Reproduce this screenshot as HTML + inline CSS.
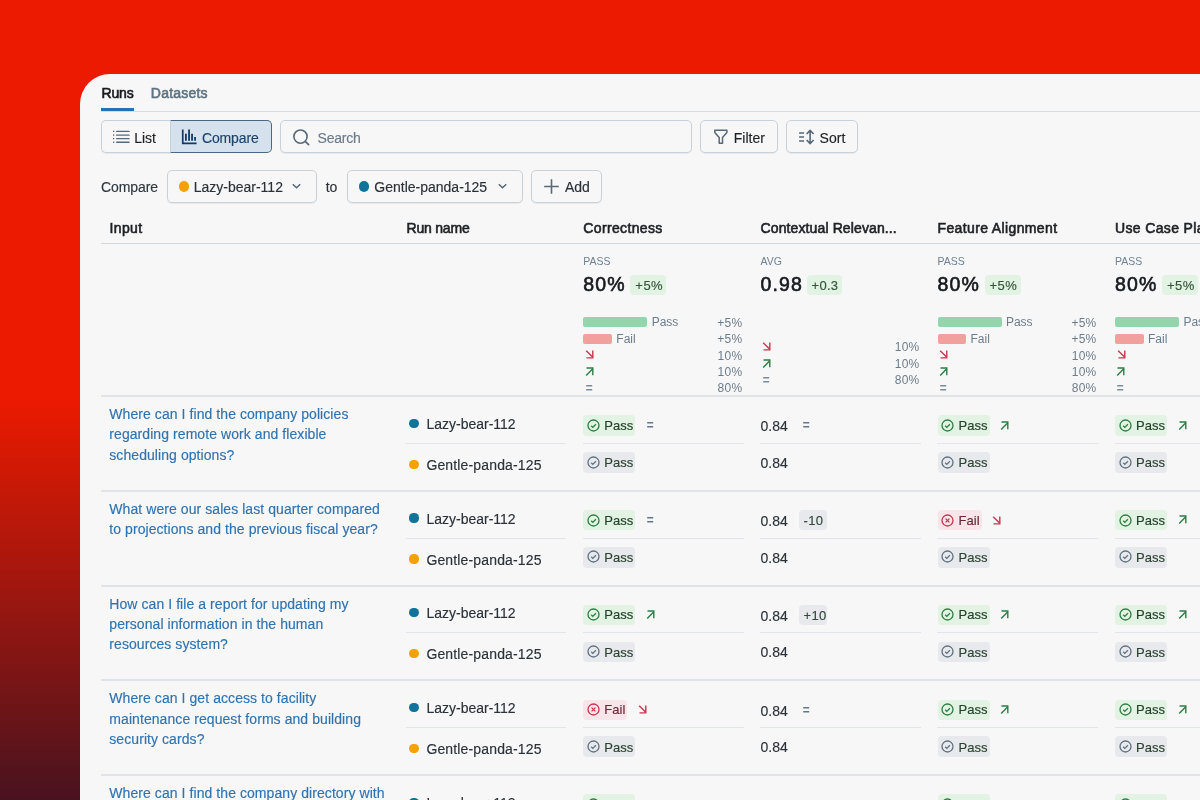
<!DOCTYPE html>
<html><head><meta charset="utf-8">
<style>
*{box-sizing:border-box;margin:0;padding:0}
html,body{width:1200px;height:800px;overflow:hidden}
body{position:relative;font-family:"Liberation Sans",sans-serif;color:#1d2125;
background:linear-gradient(180deg,#eb1a00 0px,#eb1a00 400px,#48131f 800px);}
.panel{position:absolute;left:80px;top:74px;width:1120px;height:726px;background:#f7f7f7;border-top-left-radius:30px;overflow:hidden}
.a{position:absolute;white-space:nowrap;-webkit-text-stroke:0.15px currentColor}
.nl{-webkit-text-stroke:0}
svg.a{overflow:visible}
#ui{will-change:transform}
</style></head><body>
<div class="panel">
<div id="ui" style="position:absolute;left:-80px;top:-74px;width:1200px;height:800px">
<div class="a" style="left:101.50px;top:83.00px;font-size:14px;line-height:20px;font-weight:400;color:#16191d;letter-spacing:-0.15px;-webkit-text-stroke:0.6px currentColor;">Runs</div>
<div class="a" style="left:150.80px;top:83.00px;font-size:14px;line-height:20px;font-weight:400;color:#5f7384;letter-spacing:0.22px;-webkit-text-stroke:0.6px currentColor;">Datasets</div>
<div class="a" style="left:101.00px;top:108.00px;width:33.00px;height:3.00px;background:#2272b4;"></div>
<div class="a" style="left:101.00px;top:111.00px;width:1099.00px;height:1.00px;background:#d3dbe3;"></div>
<div class="a" style="left:101.00px;top:120.00px;width:70.00px;height:33.00px;background:#f7f7f7;border:1px solid #c7d1da;border-right:none;border-radius:5px 0 0 5px;box-shadow:0 1px 1px rgba(0,0,0,0.06)"></div>
<div class="a" style="left:169.50px;top:120.00px;width:102.50px;height:33.40px;background:#d5e2ee;border:1.5px solid #4a6885;border-left:1px solid #c3d2de;border-radius:0 5px 5px 0"></div>
<svg class="a" style="left:113px;top:130px;" width="18" height="14" viewBox="0 0 18 14"><rect x="0" y="0.75" width="1.3" height="1.3" fill="#4f6475"/><rect x="3" y="0.7" width="13.7" height="1.4" rx="0.6" fill="#556a7b"/><rect x="0" y="4.45" width="1.3" height="1.3" fill="#4f6475"/><rect x="3" y="4.4" width="13.7" height="1.4" rx="0.6" fill="#556a7b"/><rect x="0" y="7.95" width="1.3" height="1.3" fill="#4f6475"/><rect x="3" y="7.9" width="13.7" height="1.4" rx="0.6" fill="#556a7b"/><rect x="0" y="11.55" width="1.3" height="1.3" fill="#4f6475"/><rect x="3" y="11.5" width="13.7" height="1.4" rx="0.6" fill="#556a7b"/></svg>
<div class="a" style="left:134.20px;top:127.50px;font-size:14px;line-height:20px;font-weight:400;color:#1d2125;letter-spacing:0px;">List</div>
<svg class="a" style="left:181px;top:129px;" width="17" height="16" viewBox="0 0 17 16"><path d="M1.75 0.4V14.3H15.6" stroke="#0f3a66" stroke-width="1.7" fill="none"/><path d="M4.9 4.7V11.8M8.05 0.4V11.8M11.05 4.7V11.8M14.05 7.9V11.8" stroke="#0f3a66" stroke-width="1.8"/></svg>
<div class="a" style="left:202.00px;top:127.50px;font-size:14px;line-height:20px;font-weight:400;color:#1c426a;letter-spacing:-0.15px;">Compare</div>
<div class="a" style="left:280.00px;top:120.00px;width:412.00px;height:33.00px;background:#f7f7f7;border:1px solid #c7d1da;border-radius:5px;box-shadow:0 1px 1px rgba(0,0,0,0.06)"></div>
<svg class="a" style="left:292px;top:128px;" width="18" height="18" viewBox="0 0 18 18"><circle cx="8.5" cy="8.6" r="6.6" stroke="#55697a" stroke-width="1.6" fill="none"/><path d="M13.2 13.3L16.6 16.7" stroke="#55697a" stroke-width="1.7" stroke-linecap="round"/></svg>
<div class="a" style="left:317.50px;top:127.50px;font-size:14px;line-height:20px;font-weight:400;color:#6a7b8a;letter-spacing:-0.2px;">Search</div>
<div class="a" style="left:700.00px;top:120.00px;width:78.00px;height:33.00px;background:#f7f7f7;border:1px solid #c7d1da;border-radius:5px;box-shadow:0 1px 1px rgba(0,0,0,0.06)"></div>
<svg class="a" style="left:713px;top:129px;" width="16" height="16" viewBox="0 0 16 16"><path d="M1.8 1.3H13.9V3.6L9.5 8.5V14.3H6.2V8.5L1.8 3.6Z" stroke="#55697a" stroke-width="1.5" fill="none" stroke-linejoin="round"/></svg>
<div class="a" style="left:733.80px;top:127.50px;font-size:14px;line-height:20px;font-weight:400;color:#1d2125;letter-spacing:0px;">Filter</div>
<div class="a" style="left:786.00px;top:120.00px;width:72.00px;height:33.00px;background:#f7f7f7;border:1px solid #c7d1da;border-radius:5px;box-shadow:0 1px 1px rgba(0,0,0,0.06)"></div>
<svg class="a" style="left:798px;top:129px;" width="20" height="16" viewBox="0 0 20 16"><path d="M1.1 4H6.1M1.1 8H6.1M1.1 12H6.1" stroke="#55697a" stroke-width="1.6"/><path d="M12.1 2V14M8.6 5L12.1 1.5L15.6 5M8.6 11L12.1 14.5L15.6 11" stroke="#55697a" stroke-width="1.6" fill="none"/></svg>
<div class="a" style="left:819.60px;top:127.50px;font-size:14px;line-height:20px;font-weight:400;color:#1d2125;letter-spacing:0px;">Sort</div>
<div class="a" style="left:101.00px;top:177.00px;font-size:14px;line-height:20px;font-weight:400;color:#2e3740;letter-spacing:-0.1px;">Compare</div>
<div class="a" style="left:167.00px;top:170.00px;width:150.00px;height:33.00px;background:#f7f7f7;border:1px solid #c7d1da;border-radius:5px;box-shadow:0 1px 1px rgba(0,0,0,0.06)"></div>
<div class="a" style="left:178.75px;top:181px;width:10.5px;height:10.5px;border-radius:50%;background:#f5a200"></div>
<div class="a" style="left:193.70px;top:177.00px;font-size:14px;line-height:20px;font-weight:400;color:#2b3138;letter-spacing:0px;">Lazy-bear-112</div>
<svg class="a" style="left:291px;top:182px;" width="11" height="8" viewBox="0 0 11 8"><path d="M1.8 2.2L5.5 5.8L9.2 2.2" stroke="#55697a" stroke-width="1.5" fill="none"/></svg>
<div class="a" style="left:325.70px;top:177.00px;font-size:14px;line-height:20px;font-weight:400;color:#2b3138;letter-spacing:0px;">to</div>
<div class="a" style="left:347.00px;top:170.00px;width:176.00px;height:33.00px;background:#f7f7f7;border:1px solid #c7d1da;border-radius:5px;box-shadow:0 1px 1px rgba(0,0,0,0.06)"></div>
<div class="a" style="left:358.75px;top:181px;width:10.5px;height:10.5px;border-radius:50%;background:#10739a"></div>
<div class="a" style="left:374.30px;top:177.00px;font-size:14px;line-height:20px;font-weight:400;color:#2b3138;letter-spacing:0px;">Gentle-panda-125</div>
<svg class="a" style="left:497px;top:182px;" width="11" height="8" viewBox="0 0 11 8"><path d="M1.8 2.2L5.5 5.8L9.2 2.2" stroke="#55697a" stroke-width="1.5" fill="none"/></svg>
<div class="a" style="left:531.00px;top:170.00px;width:71.00px;height:33.00px;background:#f7f7f7;border:1px solid #c7d1da;border-radius:5px;box-shadow:0 1px 1px rgba(0,0,0,0.06)"></div>
<svg class="a" style="left:543px;top:178px;" width="17" height="17" viewBox="0 0 17 17"><path d="M8.5 1.2V15.8M1.2 8.5H15.8" stroke="#55697a" stroke-width="1.6"/></svg>
<div class="a" style="left:565.00px;top:177.00px;font-size:14px;line-height:20px;font-weight:400;color:#2b3138;letter-spacing:0px;">Add</div>
<div class="a" style="left:109.60px;top:218.00px;font-size:14px;line-height:20px;font-weight:400;color:#1d2125;letter-spacing:0.35px;-webkit-text-stroke:0.6px currentColor;">Input</div>
<div class="a" style="left:406.50px;top:218.00px;font-size:14px;line-height:20px;font-weight:400;color:#1d2125;letter-spacing:-0.2px;-webkit-text-stroke:0.6px currentColor;">Run name</div>
<div class="a" style="left:583.30px;top:218.00px;font-size:14px;line-height:20px;font-weight:400;color:#1d2125;letter-spacing:0.35px;-webkit-text-stroke:0.6px currentColor;">Correctness</div>
<div class="a" style="left:760.50px;top:218.00px;font-size:14px;line-height:20px;font-weight:400;color:#1d2125;letter-spacing:0.12px;-webkit-text-stroke:0.6px currentColor;">Contextual Relevan...</div>
<div class="a" style="left:937.50px;top:218.00px;font-size:14px;line-height:20px;font-weight:400;color:#1d2125;letter-spacing:0.37px;-webkit-text-stroke:0.6px currentColor;">Feature Alignment</div>
<div class="a" style="left:1115.00px;top:218.00px;font-size:14px;line-height:20px;font-weight:400;color:#1d2125;letter-spacing:0.35px;-webkit-text-stroke:0.6px currentColor;">Use Case Planning</div>
<div class="a" style="left:101.00px;top:243.00px;width:1099.00px;height:1.00px;background:#cfd7df;"></div>
<div class="a nl" style="left:583.30px;top:253.50px;font-size:10.5px;line-height:15px;font-weight:400;color:#6e8293;letter-spacing:0px;">PASS</div>
<div class="a" style="left:583.30px;top:271.10px;font-size:19.5px;line-height:27px;font-weight:400;color:#16191d;letter-spacing:1.1px;-webkit-text-stroke:0.6px #16191d;">80%</div>
<div class="a" style="left:630.30px;top:275.00px;width:36.00px;height:20.40px;background:#e2f2e3;border-radius:4px"></div>
<div class="a" style="left:635.30px;top:276.50px;font-size:13px;line-height:18px;font-weight:400;color:#34553a;letter-spacing:0.5px;">+5%</div>
<div class="a" style="left:583.30px;top:317.20px;width:64.00px;height:10.00px;background:#93d6ad;border-radius:2px"></div>
<div class="a nl" style="left:651.70px;top:313.70px;font-size:12px;line-height:17px;font-weight:400;color:#6b7d8c;letter-spacing:0px;">Pass</div>
<div class="a" style="left:583.30px;top:334.00px;width:28.70px;height:10.00px;background:#f2a09d;border-radius:2px"></div>
<div class="a nl" style="left:616.30px;top:330.50px;font-size:12px;line-height:17px;font-weight:400;color:#6b7d8c;letter-spacing:0px;">Fail</div>
<svg class="a" style="left:585.2px;top:350.3px;" width="10" height="10" viewBox="0 0 10 10"><g transform="translate(0.3 0.3)"><path d="M0.9 0.4L7.5 7.0" stroke="#c9344f" stroke-width="1.4" fill="none"/><path d="M1.2 7.6H8.2M7.5 0.2V8.3" stroke="#c9344f" stroke-width="1.4" fill="none"/></g></svg>
<svg class="a" style="left:584.7px;top:367.2px;" width="10" height="10" viewBox="0 0 10 10"><g transform="translate(0.3 0.3)"><path d="M0.9 8.1L7.5 1.5" stroke="#2b7d45" stroke-width="1.4" fill="none"/><path d="M1.2 0.7H8.2M7.5 0V7.9" stroke="#2b7d45" stroke-width="1.4" fill="none"/></g></svg>
<svg class="a" style="left:585.5px;top:383.6px;" width="7" height="8" viewBox="0 0 7 8"><path d="M0.2 1.75H6.2M0.2 5.75H6.2" stroke="#7a8b99" stroke-width="1.45" transform="translate(0 0)"/></svg>
<div class="a nl" style="right:457.70px;top:314.50px;font-size:12px;line-height:17px;font-weight:400;color:#6b7d8c;letter-spacing:0.25px;">+5%</div>
<div class="a nl" style="right:457.70px;top:331.30px;font-size:12px;line-height:17px;font-weight:400;color:#6b7d8c;letter-spacing:0.25px;">+5%</div>
<div class="a nl" style="right:457.70px;top:347.60px;font-size:12px;line-height:17px;font-weight:400;color:#6b7d8c;letter-spacing:0.25px;">10%</div>
<div class="a nl" style="right:457.70px;top:363.90px;font-size:12px;line-height:17px;font-weight:400;color:#6b7d8c;letter-spacing:0.25px;">10%</div>
<div class="a nl" style="right:457.70px;top:379.90px;font-size:12px;line-height:17px;font-weight:400;color:#6b7d8c;letter-spacing:0.25px;">80%</div>
<div class="a nl" style="left:760.50px;top:253.50px;font-size:10.5px;line-height:15px;font-weight:400;color:#6e8293;letter-spacing:0px;">AVG</div>
<div class="a" style="left:760.50px;top:271.10px;font-size:19.5px;line-height:27px;font-weight:400;color:#16191d;letter-spacing:1.1px;-webkit-text-stroke:0.6px #16191d;">0.98</div>
<div class="a" style="left:806.60px;top:275.00px;width:35.00px;height:20.40px;background:#e2f2e3;border-radius:4px"></div>
<div class="a" style="left:811.50px;top:276.50px;font-size:13px;line-height:18px;font-weight:400;color:#34553a;letter-spacing:0.3px;">+0.3</div>
<svg class="a" style="left:762.2px;top:342.2px;" width="10" height="10" viewBox="0 0 10 10"><g transform="translate(0.3 0.3)"><path d="M0.9 0.4L7.5 7.0" stroke="#c9344f" stroke-width="1.4" fill="none"/><path d="M1.2 7.6H8.2M7.5 0.2V8.3" stroke="#c9344f" stroke-width="1.4" fill="none"/></g></svg>
<svg class="a" style="left:762.2px;top:358.9px;" width="10" height="10" viewBox="0 0 10 10"><g transform="translate(0.3 0.3)"><path d="M0.9 8.1L7.5 1.5" stroke="#2b7d45" stroke-width="1.4" fill="none"/><path d="M1.2 0.7H8.2M7.5 0V7.9" stroke="#2b7d45" stroke-width="1.4" fill="none"/></g></svg>
<svg class="a" style="left:762.7px;top:375.5px;" width="7" height="8" viewBox="0 0 7 8"><path d="M0.2 1.75H6.2M0.2 5.75H6.2" stroke="#7a8b99" stroke-width="1.45" transform="translate(0 0)"/></svg>
<div class="a nl" style="right:280.50px;top:339.00px;font-size:12px;line-height:17px;font-weight:400;color:#6b7d8c;letter-spacing:0.25px;">10%</div>
<div class="a nl" style="right:280.50px;top:355.80px;font-size:12px;line-height:17px;font-weight:400;color:#6b7d8c;letter-spacing:0.25px;">10%</div>
<div class="a nl" style="right:280.50px;top:371.80px;font-size:12px;line-height:17px;font-weight:400;color:#6b7d8c;letter-spacing:0.25px;">80%</div>
<div class="a nl" style="left:937.50px;top:253.50px;font-size:10.5px;line-height:15px;font-weight:400;color:#6e8293;letter-spacing:0px;">PASS</div>
<div class="a" style="left:937.50px;top:271.10px;font-size:19.5px;line-height:27px;font-weight:400;color:#16191d;letter-spacing:1.1px;-webkit-text-stroke:0.6px #16191d;">80%</div>
<div class="a" style="left:984.50px;top:275.00px;width:36.00px;height:20.40px;background:#e2f2e3;border-radius:4px"></div>
<div class="a" style="left:989.50px;top:276.50px;font-size:13px;line-height:18px;font-weight:400;color:#34553a;letter-spacing:0.5px;">+5%</div>
<div class="a" style="left:937.50px;top:317.20px;width:64.00px;height:10.00px;background:#93d6ad;border-radius:2px"></div>
<div class="a nl" style="left:1005.90px;top:313.70px;font-size:12px;line-height:17px;font-weight:400;color:#6b7d8c;letter-spacing:0px;">Pass</div>
<div class="a" style="left:937.50px;top:334.00px;width:28.70px;height:10.00px;background:#f2a09d;border-radius:2px"></div>
<div class="a nl" style="left:970.50px;top:330.50px;font-size:12px;line-height:17px;font-weight:400;color:#6b7d8c;letter-spacing:0px;">Fail</div>
<svg class="a" style="left:939.4000000000001px;top:350.3px;" width="10" height="10" viewBox="0 0 10 10"><g transform="translate(0.3 0.3)"><path d="M0.9 0.4L7.5 7.0" stroke="#c9344f" stroke-width="1.4" fill="none"/><path d="M1.2 7.6H8.2M7.5 0.2V8.3" stroke="#c9344f" stroke-width="1.4" fill="none"/></g></svg>
<svg class="a" style="left:938.9000000000001px;top:367.2px;" width="10" height="10" viewBox="0 0 10 10"><g transform="translate(0.3 0.3)"><path d="M0.9 8.1L7.5 1.5" stroke="#2b7d45" stroke-width="1.4" fill="none"/><path d="M1.2 0.7H8.2M7.5 0V7.9" stroke="#2b7d45" stroke-width="1.4" fill="none"/></g></svg>
<svg class="a" style="left:939.7px;top:383.6px;" width="7" height="8" viewBox="0 0 7 8"><path d="M0.2 1.75H6.2M0.2 5.75H6.2" stroke="#7a8b99" stroke-width="1.45" transform="translate(0 0)"/></svg>
<div class="a nl" style="right:103.50px;top:314.50px;font-size:12px;line-height:17px;font-weight:400;color:#6b7d8c;letter-spacing:0.25px;">+5%</div>
<div class="a nl" style="right:103.50px;top:331.30px;font-size:12px;line-height:17px;font-weight:400;color:#6b7d8c;letter-spacing:0.25px;">+5%</div>
<div class="a nl" style="right:103.50px;top:347.60px;font-size:12px;line-height:17px;font-weight:400;color:#6b7d8c;letter-spacing:0.25px;">10%</div>
<div class="a nl" style="right:103.50px;top:363.90px;font-size:12px;line-height:17px;font-weight:400;color:#6b7d8c;letter-spacing:0.25px;">10%</div>
<div class="a nl" style="right:103.50px;top:379.90px;font-size:12px;line-height:17px;font-weight:400;color:#6b7d8c;letter-spacing:0.25px;">80%</div>
<div class="a nl" style="left:1115.00px;top:253.50px;font-size:10.5px;line-height:15px;font-weight:400;color:#6e8293;letter-spacing:0px;">PASS</div>
<div class="a" style="left:1115.00px;top:271.10px;font-size:19.5px;line-height:27px;font-weight:400;color:#16191d;letter-spacing:1.1px;-webkit-text-stroke:0.6px #16191d;">80%</div>
<div class="a" style="left:1162.00px;top:275.00px;width:36.00px;height:20.40px;background:#e2f2e3;border-radius:4px"></div>
<div class="a" style="left:1167.00px;top:276.50px;font-size:13px;line-height:18px;font-weight:400;color:#34553a;letter-spacing:0.5px;">+5%</div>
<div class="a" style="left:1115.00px;top:317.20px;width:64.00px;height:10.00px;background:#93d6ad;border-radius:2px"></div>
<div class="a nl" style="left:1183.40px;top:313.70px;font-size:12px;line-height:17px;font-weight:400;color:#6b7d8c;letter-spacing:0px;">Pass</div>
<div class="a" style="left:1115.00px;top:334.00px;width:28.70px;height:10.00px;background:#f2a09d;border-radius:2px"></div>
<div class="a nl" style="left:1148.00px;top:330.50px;font-size:12px;line-height:17px;font-weight:400;color:#6b7d8c;letter-spacing:0px;">Fail</div>
<svg class="a" style="left:1116.9px;top:350.3px;" width="10" height="10" viewBox="0 0 10 10"><g transform="translate(0.3 0.3)"><path d="M0.9 0.4L7.5 7.0" stroke="#c9344f" stroke-width="1.4" fill="none"/><path d="M1.2 7.6H8.2M7.5 0.2V8.3" stroke="#c9344f" stroke-width="1.4" fill="none"/></g></svg>
<svg class="a" style="left:1116.4px;top:367.2px;" width="10" height="10" viewBox="0 0 10 10"><g transform="translate(0.3 0.3)"><path d="M0.9 8.1L7.5 1.5" stroke="#2b7d45" stroke-width="1.4" fill="none"/><path d="M1.2 0.7H8.2M7.5 0V7.9" stroke="#2b7d45" stroke-width="1.4" fill="none"/></g></svg>
<svg class="a" style="left:1117.2px;top:383.6px;" width="7" height="8" viewBox="0 0 7 8"><path d="M0.2 1.75H6.2M0.2 5.75H6.2" stroke="#7a8b99" stroke-width="1.45" transform="translate(0 0)"/></svg>
<div class="a nl" style="right:-74.00px;top:314.50px;font-size:12px;line-height:17px;font-weight:400;color:#6b7d8c;letter-spacing:0.25px;">+5%</div>
<div class="a nl" style="right:-74.00px;top:331.30px;font-size:12px;line-height:17px;font-weight:400;color:#6b7d8c;letter-spacing:0.25px;">+5%</div>
<div class="a nl" style="right:-74.00px;top:347.60px;font-size:12px;line-height:17px;font-weight:400;color:#6b7d8c;letter-spacing:0.25px;">10%</div>
<div class="a nl" style="right:-74.00px;top:363.90px;font-size:12px;line-height:17px;font-weight:400;color:#6b7d8c;letter-spacing:0.25px;">10%</div>
<div class="a nl" style="right:-74.00px;top:379.90px;font-size:12px;line-height:17px;font-weight:400;color:#6b7d8c;letter-spacing:0.25px;">80%</div>
<div class="a" style="left:101.00px;top:395.00px;width:1099.00px;height:2.00px;background:#e0e4e9;"></div>
<div class="a" style="left:109.30px;top:404.00px;font-size:14px;line-height:20px;font-weight:400;color:#2f73b0;letter-spacing:0.07px;">Where can I find the company policies</div>
<div class="a" style="left:109.30px;top:424.40px;font-size:14px;line-height:20px;font-weight:400;color:#2f73b0;letter-spacing:0.07px;">regarding remote work and flexible</div>
<div class="a" style="left:109.30px;top:444.80px;font-size:14px;line-height:20px;font-weight:400;color:#2f73b0;letter-spacing:0.07px;">scheduling options?</div>
<div class="a" style="left:409.4px;top:418.65px;width:9.2px;height:9.2px;border-radius:50%;background:#10739a"></div>
<div class="a" style="left:426.40px;top:413.75px;font-size:14px;line-height:20px;font-weight:400;color:#2b3138;letter-spacing:0px;">Lazy-bear-112</div>
<div class="a" style="left:409.4px;top:459.65px;width:9.2px;height:9.2px;border-radius:50%;background:#f5a200"></div>
<div class="a" style="left:426.40px;top:454.75px;font-size:14px;line-height:20px;font-weight:400;color:#2b3138;letter-spacing:0.15px;">Gentle-panda-125</div>
<div class="a" style="left:406.00px;top:442.75px;width:160.00px;height:1.00px;background:#e1e5ea;"></div>
<div class="a" style="left:583.00px;top:442.75px;width:161.00px;height:1.00px;background:#e1e5ea;"></div>
<div class="a" style="left:760.00px;top:442.75px;width:161.00px;height:1.00px;background:#e1e5ea;"></div>
<div class="a" style="left:937.00px;top:442.75px;width:161.00px;height:1.00px;background:#e1e5ea;"></div>
<div class="a" style="left:1115.00px;top:442.75px;width:85.00px;height:1.00px;background:#e1e5ea;"></div>
<div class="a" style="left:583.30px;top:415.25px;width:52.00px;height:20.40px;background:#e2f2e3;border-radius:4px"></div>
<svg class="a" style="left:587px;top:419px;" width="13" height="13" viewBox="0 0 13 13"><circle cx="6.5" cy="6.5" r="5.5" stroke="#2e7d42" stroke-width="1.3" fill="none"/><path d="M4.2 6.8L5.8 8.4L8.9 5.3" stroke="#2e7d42" stroke-width="1.3" fill="none"/></svg>
<div class="a" style="left:604.30px;top:416.85px;font-size:13px;line-height:18px;font-weight:400;color:#23402a;letter-spacing:0.05px;">Pass</div>
<div class="a" style="left:583.30px;top:452.05px;width:52.00px;height:20.80px;background:#e8e9ec;border-radius:4px"></div>
<svg class="a" style="left:587px;top:456px;" width="13" height="13" viewBox="0 0 13 13"><circle cx="6.5" cy="6.5" r="5.5" stroke="#5f7282" stroke-width="1.3" fill="none"/><path d="M4.2 6.8L5.8 8.4L8.9 5.3" stroke="#5f7282" stroke-width="1.3" fill="none"/></svg>
<div class="a" style="left:604.30px;top:454.45px;font-size:13px;line-height:18px;font-weight:400;color:#2a4231;letter-spacing:0.05px;">Pass</div>
<svg class="a" style="left:647.0999999999999px;top:421.25px;" width="7" height="8" viewBox="0 0 7 8"><path d="M0.2 1.75H6.2M0.2 5.75H6.2" stroke="#63778a" stroke-width="1.45" transform="translate(0 0)"/></svg>
<div class="a" style="left:760.50px;top:416.15px;font-size:14px;line-height:20px;font-weight:400;color:#2b3138;letter-spacing:0px;">0.84</div>
<div class="a" style="left:760.50px;top:452.75px;font-size:14px;line-height:20px;font-weight:400;color:#2b3138;letter-spacing:0px;">0.84</div>
<svg class="a" style="left:803.0px;top:421.25px;" width="7" height="8" viewBox="0 0 7 8"><path d="M0.2 1.75H6.2M0.2 5.75H6.2" stroke="#63778a" stroke-width="1.45" transform="translate(0 0)"/></svg>
<div class="a" style="left:937.50px;top:415.25px;width:52.00px;height:20.40px;background:#e2f2e3;border-radius:4px"></div>
<svg class="a" style="left:941px;top:419px;" width="13" height="13" viewBox="0 0 13 13"><circle cx="6.5" cy="6.5" r="5.5" stroke="#2e7d42" stroke-width="1.3" fill="none"/><path d="M4.2 6.8L5.8 8.4L8.9 5.3" stroke="#2e7d42" stroke-width="1.3" fill="none"/></svg>
<div class="a" style="left:958.50px;top:416.85px;font-size:13px;line-height:18px;font-weight:400;color:#23402a;letter-spacing:0.05px;">Pass</div>
<div class="a" style="left:937.50px;top:452.05px;width:52.00px;height:20.80px;background:#e8e9ec;border-radius:4px"></div>
<svg class="a" style="left:941px;top:456px;" width="13" height="13" viewBox="0 0 13 13"><circle cx="6.5" cy="6.5" r="5.5" stroke="#5f7282" stroke-width="1.3" fill="none"/><path d="M4.2 6.8L5.8 8.4L8.9 5.3" stroke="#5f7282" stroke-width="1.3" fill="none"/></svg>
<div class="a" style="left:958.50px;top:454.45px;font-size:13px;line-height:18px;font-weight:400;color:#2a4231;letter-spacing:0.05px;">Pass</div>
<svg class="a" style="left:1000.3000000000001px;top:420.55px;" width="10" height="10" viewBox="0 0 10 10"><g transform="translate(0.3 0.3)"><path d="M0.9 8.1L7.5 1.5" stroke="#2b7d45" stroke-width="1.4" fill="none"/><path d="M1.2 0.7H8.2M7.5 0V7.9" stroke="#2b7d45" stroke-width="1.4" fill="none"/></g></svg>
<div class="a" style="left:1115.00px;top:415.25px;width:52.00px;height:20.40px;background:#e2f2e3;border-radius:4px"></div>
<svg class="a" style="left:1119px;top:419px;" width="13" height="13" viewBox="0 0 13 13"><circle cx="6.5" cy="6.5" r="5.5" stroke="#2e7d42" stroke-width="1.3" fill="none"/><path d="M4.2 6.8L5.8 8.4L8.9 5.3" stroke="#2e7d42" stroke-width="1.3" fill="none"/></svg>
<div class="a" style="left:1136.00px;top:416.85px;font-size:13px;line-height:18px;font-weight:400;color:#23402a;letter-spacing:0.05px;">Pass</div>
<div class="a" style="left:1115.00px;top:452.05px;width:52.00px;height:20.80px;background:#e8e9ec;border-radius:4px"></div>
<svg class="a" style="left:1119px;top:456px;" width="13" height="13" viewBox="0 0 13 13"><circle cx="6.5" cy="6.5" r="5.5" stroke="#5f7282" stroke-width="1.3" fill="none"/><path d="M4.2 6.8L5.8 8.4L8.9 5.3" stroke="#5f7282" stroke-width="1.3" fill="none"/></svg>
<div class="a" style="left:1136.00px;top:454.45px;font-size:13px;line-height:18px;font-weight:400;color:#2a4231;letter-spacing:0.05px;">Pass</div>
<svg class="a" style="left:1177.8px;top:420.55px;" width="10" height="10" viewBox="0 0 10 10"><g transform="translate(0.3 0.3)"><path d="M0.9 8.1L7.5 1.5" stroke="#2b7d45" stroke-width="1.4" fill="none"/><path d="M1.2 0.7H8.2M7.5 0V7.9" stroke="#2b7d45" stroke-width="1.4" fill="none"/></g></svg>
<div class="a" style="left:101.00px;top:489.80px;width:1099.00px;height:2.00px;background:#e0e4e9;"></div>
<div class="a" style="left:109.30px;top:498.80px;font-size:14px;line-height:20px;font-weight:400;color:#2f73b0;letter-spacing:0.07px;">What were our sales last quarter compared</div>
<div class="a" style="left:109.30px;top:519.20px;font-size:14px;line-height:20px;font-weight:400;color:#2f73b0;letter-spacing:0.07px;">to projections and the previous fiscal year?</div>
<div class="a" style="left:409.4px;top:513.45px;width:9.2px;height:9.2px;border-radius:50%;background:#10739a"></div>
<div class="a" style="left:426.40px;top:508.55px;font-size:14px;line-height:20px;font-weight:400;color:#2b3138;letter-spacing:0px;">Lazy-bear-112</div>
<div class="a" style="left:409.4px;top:554.45px;width:9.2px;height:9.2px;border-radius:50%;background:#f5a200"></div>
<div class="a" style="left:426.40px;top:549.55px;font-size:14px;line-height:20px;font-weight:400;color:#2b3138;letter-spacing:0.15px;">Gentle-panda-125</div>
<div class="a" style="left:406.00px;top:537.55px;width:160.00px;height:1.00px;background:#e1e5ea;"></div>
<div class="a" style="left:583.00px;top:537.55px;width:161.00px;height:1.00px;background:#e1e5ea;"></div>
<div class="a" style="left:760.00px;top:537.55px;width:161.00px;height:1.00px;background:#e1e5ea;"></div>
<div class="a" style="left:937.00px;top:537.55px;width:161.00px;height:1.00px;background:#e1e5ea;"></div>
<div class="a" style="left:1115.00px;top:537.55px;width:85.00px;height:1.00px;background:#e1e5ea;"></div>
<div class="a" style="left:583.30px;top:510.05px;width:52.00px;height:20.40px;background:#e2f2e3;border-radius:4px"></div>
<svg class="a" style="left:587px;top:514px;" width="13" height="13" viewBox="0 0 13 13"><circle cx="6.5" cy="6.5" r="5.5" stroke="#2e7d42" stroke-width="1.3" fill="none"/><path d="M4.2 6.8L5.8 8.4L8.9 5.3" stroke="#2e7d42" stroke-width="1.3" fill="none"/></svg>
<div class="a" style="left:604.30px;top:511.65px;font-size:13px;line-height:18px;font-weight:400;color:#23402a;letter-spacing:0.05px;">Pass</div>
<div class="a" style="left:583.30px;top:546.85px;width:52.00px;height:20.80px;background:#e8e9ec;border-radius:4px"></div>
<svg class="a" style="left:587px;top:550px;" width="13" height="13" viewBox="0 0 13 13"><circle cx="6.5" cy="6.5" r="5.5" stroke="#5f7282" stroke-width="1.3" fill="none"/><path d="M4.2 6.8L5.8 8.4L8.9 5.3" stroke="#5f7282" stroke-width="1.3" fill="none"/></svg>
<div class="a" style="left:604.30px;top:549.25px;font-size:13px;line-height:18px;font-weight:400;color:#2a4231;letter-spacing:0.05px;">Pass</div>
<svg class="a" style="left:647.0999999999999px;top:516.05px;" width="7" height="8" viewBox="0 0 7 8"><path d="M0.2 1.75H6.2M0.2 5.75H6.2" stroke="#63778a" stroke-width="1.45" transform="translate(0 0)"/></svg>
<div class="a" style="left:760.50px;top:510.95px;font-size:14px;line-height:20px;font-weight:400;color:#2b3138;letter-spacing:0px;">0.84</div>
<div class="a" style="left:760.50px;top:547.55px;font-size:14px;line-height:20px;font-weight:400;color:#2b3138;letter-spacing:0px;">0.84</div>
<div class="a" style="left:799.00px;top:510.05px;width:28.00px;height:20.40px;background:#e8e9ec;border-radius:4px"></div>
<div class="a" style="left:803.50px;top:512.45px;font-size:13px;line-height:18px;font-weight:400;color:#33483a;letter-spacing:0.3px;">-10</div>
<div class="a" style="left:937.50px;top:510.05px;width:44.00px;height:20.40px;background:#f8e5e9;border-radius:4px"></div>
<svg class="a" style="left:941px;top:514px;" width="13" height="13" viewBox="0 0 13 13"><circle cx="6.5" cy="6.5" r="5.5" stroke="#c7354f" stroke-width="1.3" fill="none"/><path d="M4.6 4.6L8.4 8.4M8.4 4.6L4.6 8.4" stroke="#c7354f" stroke-width="1.3"/></svg>
<div class="a" style="left:958.50px;top:511.65px;font-size:13px;line-height:18px;font-weight:400;color:#6d2636;letter-spacing:0.05px;">Fail</div>
<div class="a" style="left:937.50px;top:546.85px;width:52.00px;height:20.80px;background:#e8e9ec;border-radius:4px"></div>
<svg class="a" style="left:941px;top:550px;" width="13" height="13" viewBox="0 0 13 13"><circle cx="6.5" cy="6.5" r="5.5" stroke="#5f7282" stroke-width="1.3" fill="none"/><path d="M4.2 6.8L5.8 8.4L8.9 5.3" stroke="#5f7282" stroke-width="1.3" fill="none"/></svg>
<div class="a" style="left:958.50px;top:549.25px;font-size:13px;line-height:18px;font-weight:400;color:#2a4231;letter-spacing:0.05px;">Pass</div>
<svg class="a" style="left:992.3000000000001px;top:515.6px;" width="10" height="10" viewBox="0 0 10 10"><g transform="translate(0.3 0.3)"><path d="M0.9 0.4L7.5 7.0" stroke="#c9344f" stroke-width="1.4" fill="none"/><path d="M1.2 7.6H8.2M7.5 0.2V8.3" stroke="#c9344f" stroke-width="1.4" fill="none"/></g></svg>
<div class="a" style="left:1115.00px;top:510.05px;width:52.00px;height:20.40px;background:#e2f2e3;border-radius:4px"></div>
<svg class="a" style="left:1119px;top:514px;" width="13" height="13" viewBox="0 0 13 13"><circle cx="6.5" cy="6.5" r="5.5" stroke="#2e7d42" stroke-width="1.3" fill="none"/><path d="M4.2 6.8L5.8 8.4L8.9 5.3" stroke="#2e7d42" stroke-width="1.3" fill="none"/></svg>
<div class="a" style="left:1136.00px;top:511.65px;font-size:13px;line-height:18px;font-weight:400;color:#23402a;letter-spacing:0.05px;">Pass</div>
<div class="a" style="left:1115.00px;top:546.85px;width:52.00px;height:20.80px;background:#e8e9ec;border-radius:4px"></div>
<svg class="a" style="left:1119px;top:550px;" width="13" height="13" viewBox="0 0 13 13"><circle cx="6.5" cy="6.5" r="5.5" stroke="#5f7282" stroke-width="1.3" fill="none"/><path d="M4.2 6.8L5.8 8.4L8.9 5.3" stroke="#5f7282" stroke-width="1.3" fill="none"/></svg>
<div class="a" style="left:1136.00px;top:549.25px;font-size:13px;line-height:18px;font-weight:400;color:#2a4231;letter-spacing:0.05px;">Pass</div>
<svg class="a" style="left:1177.8px;top:515.35px;" width="10" height="10" viewBox="0 0 10 10"><g transform="translate(0.3 0.3)"><path d="M0.9 8.1L7.5 1.5" stroke="#2b7d45" stroke-width="1.4" fill="none"/><path d="M1.2 0.7H8.2M7.5 0V7.9" stroke="#2b7d45" stroke-width="1.4" fill="none"/></g></svg>
<div class="a" style="left:101.00px;top:584.60px;width:1099.00px;height:2.00px;background:#e0e4e9;"></div>
<div class="a" style="left:109.30px;top:593.60px;font-size:14px;line-height:20px;font-weight:400;color:#2f73b0;letter-spacing:0.07px;">How can I file a report for updating my</div>
<div class="a" style="left:109.30px;top:614.00px;font-size:14px;line-height:20px;font-weight:400;color:#2f73b0;letter-spacing:0.07px;">personal information in the human</div>
<div class="a" style="left:109.30px;top:634.40px;font-size:14px;line-height:20px;font-weight:400;color:#2f73b0;letter-spacing:0.07px;">resources system?</div>
<div class="a" style="left:409.4px;top:608.25px;width:9.2px;height:9.2px;border-radius:50%;background:#10739a"></div>
<div class="a" style="left:426.40px;top:603.35px;font-size:14px;line-height:20px;font-weight:400;color:#2b3138;letter-spacing:0px;">Lazy-bear-112</div>
<div class="a" style="left:409.4px;top:649.25px;width:9.2px;height:9.2px;border-radius:50%;background:#f5a200"></div>
<div class="a" style="left:426.40px;top:644.35px;font-size:14px;line-height:20px;font-weight:400;color:#2b3138;letter-spacing:0.15px;">Gentle-panda-125</div>
<div class="a" style="left:406.00px;top:632.35px;width:160.00px;height:1.00px;background:#e1e5ea;"></div>
<div class="a" style="left:583.00px;top:632.35px;width:161.00px;height:1.00px;background:#e1e5ea;"></div>
<div class="a" style="left:760.00px;top:632.35px;width:161.00px;height:1.00px;background:#e1e5ea;"></div>
<div class="a" style="left:937.00px;top:632.35px;width:161.00px;height:1.00px;background:#e1e5ea;"></div>
<div class="a" style="left:1115.00px;top:632.35px;width:85.00px;height:1.00px;background:#e1e5ea;"></div>
<div class="a" style="left:583.30px;top:604.85px;width:52.00px;height:20.40px;background:#e2f2e3;border-radius:4px"></div>
<svg class="a" style="left:587px;top:608px;" width="13" height="13" viewBox="0 0 13 13"><circle cx="6.5" cy="6.5" r="5.5" stroke="#2e7d42" stroke-width="1.3" fill="none"/><path d="M4.2 6.8L5.8 8.4L8.9 5.3" stroke="#2e7d42" stroke-width="1.3" fill="none"/></svg>
<div class="a" style="left:604.30px;top:606.45px;font-size:13px;line-height:18px;font-weight:400;color:#23402a;letter-spacing:0.05px;">Pass</div>
<div class="a" style="left:583.30px;top:641.65px;width:52.00px;height:20.80px;background:#e8e9ec;border-radius:4px"></div>
<svg class="a" style="left:587px;top:645px;" width="13" height="13" viewBox="0 0 13 13"><circle cx="6.5" cy="6.5" r="5.5" stroke="#5f7282" stroke-width="1.3" fill="none"/><path d="M4.2 6.8L5.8 8.4L8.9 5.3" stroke="#5f7282" stroke-width="1.3" fill="none"/></svg>
<div class="a" style="left:604.30px;top:644.05px;font-size:13px;line-height:18px;font-weight:400;color:#2a4231;letter-spacing:0.05px;">Pass</div>
<svg class="a" style="left:646.1px;top:610.1500000000001px;" width="10" height="10" viewBox="0 0 10 10"><g transform="translate(0.3 0.3)"><path d="M0.9 8.1L7.5 1.5" stroke="#2b7d45" stroke-width="1.4" fill="none"/><path d="M1.2 0.7H8.2M7.5 0V7.9" stroke="#2b7d45" stroke-width="1.4" fill="none"/></g></svg>
<div class="a" style="left:760.50px;top:605.75px;font-size:14px;line-height:20px;font-weight:400;color:#2b3138;letter-spacing:0px;">0.84</div>
<div class="a" style="left:760.50px;top:642.35px;font-size:14px;line-height:20px;font-weight:400;color:#2b3138;letter-spacing:0px;">0.84</div>
<div class="a" style="left:799.00px;top:604.85px;width:28.00px;height:20.40px;background:#e8e9ec;border-radius:4px"></div>
<div class="a" style="left:803.50px;top:607.25px;font-size:13px;line-height:18px;font-weight:400;color:#33483a;letter-spacing:0.3px;">+10</div>
<div class="a" style="left:937.50px;top:604.85px;width:52.00px;height:20.40px;background:#e2f2e3;border-radius:4px"></div>
<svg class="a" style="left:941px;top:608px;" width="13" height="13" viewBox="0 0 13 13"><circle cx="6.5" cy="6.5" r="5.5" stroke="#2e7d42" stroke-width="1.3" fill="none"/><path d="M4.2 6.8L5.8 8.4L8.9 5.3" stroke="#2e7d42" stroke-width="1.3" fill="none"/></svg>
<div class="a" style="left:958.50px;top:606.45px;font-size:13px;line-height:18px;font-weight:400;color:#23402a;letter-spacing:0.05px;">Pass</div>
<div class="a" style="left:937.50px;top:641.65px;width:52.00px;height:20.80px;background:#e8e9ec;border-radius:4px"></div>
<svg class="a" style="left:941px;top:645px;" width="13" height="13" viewBox="0 0 13 13"><circle cx="6.5" cy="6.5" r="5.5" stroke="#5f7282" stroke-width="1.3" fill="none"/><path d="M4.2 6.8L5.8 8.4L8.9 5.3" stroke="#5f7282" stroke-width="1.3" fill="none"/></svg>
<div class="a" style="left:958.50px;top:644.05px;font-size:13px;line-height:18px;font-weight:400;color:#2a4231;letter-spacing:0.05px;">Pass</div>
<svg class="a" style="left:1000.3000000000001px;top:610.1500000000001px;" width="10" height="10" viewBox="0 0 10 10"><g transform="translate(0.3 0.3)"><path d="M0.9 8.1L7.5 1.5" stroke="#2b7d45" stroke-width="1.4" fill="none"/><path d="M1.2 0.7H8.2M7.5 0V7.9" stroke="#2b7d45" stroke-width="1.4" fill="none"/></g></svg>
<div class="a" style="left:1115.00px;top:604.85px;width:52.00px;height:20.40px;background:#e2f2e3;border-radius:4px"></div>
<svg class="a" style="left:1119px;top:608px;" width="13" height="13" viewBox="0 0 13 13"><circle cx="6.5" cy="6.5" r="5.5" stroke="#2e7d42" stroke-width="1.3" fill="none"/><path d="M4.2 6.8L5.8 8.4L8.9 5.3" stroke="#2e7d42" stroke-width="1.3" fill="none"/></svg>
<div class="a" style="left:1136.00px;top:606.45px;font-size:13px;line-height:18px;font-weight:400;color:#23402a;letter-spacing:0.05px;">Pass</div>
<div class="a" style="left:1115.00px;top:641.65px;width:52.00px;height:20.80px;background:#e8e9ec;border-radius:4px"></div>
<svg class="a" style="left:1119px;top:645px;" width="13" height="13" viewBox="0 0 13 13"><circle cx="6.5" cy="6.5" r="5.5" stroke="#5f7282" stroke-width="1.3" fill="none"/><path d="M4.2 6.8L5.8 8.4L8.9 5.3" stroke="#5f7282" stroke-width="1.3" fill="none"/></svg>
<div class="a" style="left:1136.00px;top:644.05px;font-size:13px;line-height:18px;font-weight:400;color:#2a4231;letter-spacing:0.05px;">Pass</div>
<svg class="a" style="left:1177.8px;top:610.1500000000001px;" width="10" height="10" viewBox="0 0 10 10"><g transform="translate(0.3 0.3)"><path d="M0.9 8.1L7.5 1.5" stroke="#2b7d45" stroke-width="1.4" fill="none"/><path d="M1.2 0.7H8.2M7.5 0V7.9" stroke="#2b7d45" stroke-width="1.4" fill="none"/></g></svg>
<div class="a" style="left:101.00px;top:679.40px;width:1099.00px;height:2.00px;background:#e0e4e9;"></div>
<div class="a" style="left:109.30px;top:688.40px;font-size:14px;line-height:20px;font-weight:400;color:#2f73b0;letter-spacing:0.07px;">Where can I get access to facility</div>
<div class="a" style="left:109.30px;top:708.80px;font-size:14px;line-height:20px;font-weight:400;color:#2f73b0;letter-spacing:0.07px;">maintenance request forms and building</div>
<div class="a" style="left:109.30px;top:729.20px;font-size:14px;line-height:20px;font-weight:400;color:#2f73b0;letter-spacing:0.07px;">security cards?</div>
<div class="a" style="left:409.4px;top:703.05px;width:9.2px;height:9.2px;border-radius:50%;background:#10739a"></div>
<div class="a" style="left:426.40px;top:698.15px;font-size:14px;line-height:20px;font-weight:400;color:#2b3138;letter-spacing:0px;">Lazy-bear-112</div>
<div class="a" style="left:409.4px;top:744.05px;width:9.2px;height:9.2px;border-radius:50%;background:#f5a200"></div>
<div class="a" style="left:426.40px;top:739.15px;font-size:14px;line-height:20px;font-weight:400;color:#2b3138;letter-spacing:0.15px;">Gentle-panda-125</div>
<div class="a" style="left:406.00px;top:727.15px;width:160.00px;height:1.00px;background:#e1e5ea;"></div>
<div class="a" style="left:583.00px;top:727.15px;width:161.00px;height:1.00px;background:#e1e5ea;"></div>
<div class="a" style="left:760.00px;top:727.15px;width:161.00px;height:1.00px;background:#e1e5ea;"></div>
<div class="a" style="left:937.00px;top:727.15px;width:161.00px;height:1.00px;background:#e1e5ea;"></div>
<div class="a" style="left:1115.00px;top:727.15px;width:85.00px;height:1.00px;background:#e1e5ea;"></div>
<div class="a" style="left:583.30px;top:699.65px;width:44.00px;height:20.40px;background:#f8e5e9;border-radius:4px"></div>
<svg class="a" style="left:587px;top:703px;" width="13" height="13" viewBox="0 0 13 13"><circle cx="6.5" cy="6.5" r="5.5" stroke="#c7354f" stroke-width="1.3" fill="none"/><path d="M4.6 4.6L8.4 8.4M8.4 4.6L4.6 8.4" stroke="#c7354f" stroke-width="1.3"/></svg>
<div class="a" style="left:604.30px;top:701.25px;font-size:13px;line-height:18px;font-weight:400;color:#6d2636;letter-spacing:0.05px;">Fail</div>
<div class="a" style="left:583.30px;top:736.45px;width:52.00px;height:20.80px;background:#e8e9ec;border-radius:4px"></div>
<svg class="a" style="left:587px;top:740px;" width="13" height="13" viewBox="0 0 13 13"><circle cx="6.5" cy="6.5" r="5.5" stroke="#5f7282" stroke-width="1.3" fill="none"/><path d="M4.2 6.8L5.8 8.4L8.9 5.3" stroke="#5f7282" stroke-width="1.3" fill="none"/></svg>
<div class="a" style="left:604.30px;top:738.85px;font-size:13px;line-height:18px;font-weight:400;color:#2a4231;letter-spacing:0.05px;">Pass</div>
<svg class="a" style="left:638.1px;top:705.2px;" width="10" height="10" viewBox="0 0 10 10"><g transform="translate(0.3 0.3)"><path d="M0.9 0.4L7.5 7.0" stroke="#c9344f" stroke-width="1.4" fill="none"/><path d="M1.2 7.6H8.2M7.5 0.2V8.3" stroke="#c9344f" stroke-width="1.4" fill="none"/></g></svg>
<div class="a" style="left:760.50px;top:700.55px;font-size:14px;line-height:20px;font-weight:400;color:#2b3138;letter-spacing:0px;">0.84</div>
<div class="a" style="left:760.50px;top:737.15px;font-size:14px;line-height:20px;font-weight:400;color:#2b3138;letter-spacing:0px;">0.84</div>
<svg class="a" style="left:803.0px;top:705.65px;" width="7" height="8" viewBox="0 0 7 8"><path d="M0.2 1.75H6.2M0.2 5.75H6.2" stroke="#63778a" stroke-width="1.45" transform="translate(0 0)"/></svg>
<div class="a" style="left:937.50px;top:699.65px;width:52.00px;height:20.40px;background:#e2f2e3;border-radius:4px"></div>
<svg class="a" style="left:941px;top:703px;" width="13" height="13" viewBox="0 0 13 13"><circle cx="6.5" cy="6.5" r="5.5" stroke="#2e7d42" stroke-width="1.3" fill="none"/><path d="M4.2 6.8L5.8 8.4L8.9 5.3" stroke="#2e7d42" stroke-width="1.3" fill="none"/></svg>
<div class="a" style="left:958.50px;top:701.25px;font-size:13px;line-height:18px;font-weight:400;color:#23402a;letter-spacing:0.05px;">Pass</div>
<div class="a" style="left:937.50px;top:736.45px;width:52.00px;height:20.80px;background:#e8e9ec;border-radius:4px"></div>
<svg class="a" style="left:941px;top:740px;" width="13" height="13" viewBox="0 0 13 13"><circle cx="6.5" cy="6.5" r="5.5" stroke="#5f7282" stroke-width="1.3" fill="none"/><path d="M4.2 6.8L5.8 8.4L8.9 5.3" stroke="#5f7282" stroke-width="1.3" fill="none"/></svg>
<div class="a" style="left:958.50px;top:738.85px;font-size:13px;line-height:18px;font-weight:400;color:#2a4231;letter-spacing:0.05px;">Pass</div>
<svg class="a" style="left:1000.3000000000001px;top:704.95px;" width="10" height="10" viewBox="0 0 10 10"><g transform="translate(0.3 0.3)"><path d="M0.9 8.1L7.5 1.5" stroke="#2b7d45" stroke-width="1.4" fill="none"/><path d="M1.2 0.7H8.2M7.5 0V7.9" stroke="#2b7d45" stroke-width="1.4" fill="none"/></g></svg>
<div class="a" style="left:1115.00px;top:699.65px;width:52.00px;height:20.40px;background:#e2f2e3;border-radius:4px"></div>
<svg class="a" style="left:1119px;top:703px;" width="13" height="13" viewBox="0 0 13 13"><circle cx="6.5" cy="6.5" r="5.5" stroke="#2e7d42" stroke-width="1.3" fill="none"/><path d="M4.2 6.8L5.8 8.4L8.9 5.3" stroke="#2e7d42" stroke-width="1.3" fill="none"/></svg>
<div class="a" style="left:1136.00px;top:701.25px;font-size:13px;line-height:18px;font-weight:400;color:#23402a;letter-spacing:0.05px;">Pass</div>
<div class="a" style="left:1115.00px;top:736.45px;width:52.00px;height:20.80px;background:#e8e9ec;border-radius:4px"></div>
<svg class="a" style="left:1119px;top:740px;" width="13" height="13" viewBox="0 0 13 13"><circle cx="6.5" cy="6.5" r="5.5" stroke="#5f7282" stroke-width="1.3" fill="none"/><path d="M4.2 6.8L5.8 8.4L8.9 5.3" stroke="#5f7282" stroke-width="1.3" fill="none"/></svg>
<div class="a" style="left:1136.00px;top:738.85px;font-size:13px;line-height:18px;font-weight:400;color:#2a4231;letter-spacing:0.05px;">Pass</div>
<svg class="a" style="left:1177.8px;top:704.95px;" width="10" height="10" viewBox="0 0 10 10"><g transform="translate(0.3 0.3)"><path d="M0.9 8.1L7.5 1.5" stroke="#2b7d45" stroke-width="1.4" fill="none"/><path d="M1.2 0.7H8.2M7.5 0V7.9" stroke="#2b7d45" stroke-width="1.4" fill="none"/></g></svg>
<div class="a" style="left:101.00px;top:774.20px;width:1099.00px;height:2.00px;background:#e0e4e9;"></div>
<div class="a" style="left:109.30px;top:783.20px;font-size:14px;line-height:20px;font-weight:400;color:#2f73b0;letter-spacing:0.07px;">Where can I find the company directory with</div>
<div class="a" style="left:109.30px;top:803.60px;font-size:14px;line-height:20px;font-weight:400;color:#2f73b0;letter-spacing:0.07px;">contact information for all</div>
<div class="a" style="left:109.30px;top:824.00px;font-size:14px;line-height:20px;font-weight:400;color:#2f73b0;letter-spacing:0.07px;">departments?</div>
<div class="a" style="left:409.4px;top:797.85px;width:9.2px;height:9.2px;border-radius:50%;background:#10739a"></div>
<div class="a" style="left:426.40px;top:792.95px;font-size:14px;line-height:20px;font-weight:400;color:#2b3138;letter-spacing:0px;">Lazy-bear-112</div>
<div class="a" style="left:409.4px;top:838.85px;width:9.2px;height:9.2px;border-radius:50%;background:#f5a200"></div>
<div class="a" style="left:426.40px;top:833.95px;font-size:14px;line-height:20px;font-weight:400;color:#2b3138;letter-spacing:0.15px;">Gentle-panda-125</div>
<div class="a" style="left:406.00px;top:821.95px;width:160.00px;height:1.00px;background:#e1e5ea;"></div>
<div class="a" style="left:583.00px;top:821.95px;width:161.00px;height:1.00px;background:#e1e5ea;"></div>
<div class="a" style="left:760.00px;top:821.95px;width:161.00px;height:1.00px;background:#e1e5ea;"></div>
<div class="a" style="left:937.00px;top:821.95px;width:161.00px;height:1.00px;background:#e1e5ea;"></div>
<div class="a" style="left:1115.00px;top:821.95px;width:85.00px;height:1.00px;background:#e1e5ea;"></div>
<div class="a" style="left:583.30px;top:794.45px;width:52.00px;height:20.40px;background:#e2f2e3;border-radius:4px"></div>
<svg class="a" style="left:587px;top:798px;" width="13" height="13" viewBox="0 0 13 13"><circle cx="6.5" cy="6.5" r="5.5" stroke="#2e7d42" stroke-width="1.3" fill="none"/><path d="M4.2 6.8L5.8 8.4L8.9 5.3" stroke="#2e7d42" stroke-width="1.3" fill="none"/></svg>
<div class="a" style="left:604.30px;top:796.05px;font-size:13px;line-height:18px;font-weight:400;color:#23402a;letter-spacing:0.05px;">Pass</div>
<div class="a" style="left:583.30px;top:831.25px;width:52.00px;height:20.80px;background:#e8e9ec;border-radius:4px"></div>
<svg class="a" style="left:587px;top:835px;" width="13" height="13" viewBox="0 0 13 13"><circle cx="6.5" cy="6.5" r="5.5" stroke="#5f7282" stroke-width="1.3" fill="none"/><path d="M4.2 6.8L5.8 8.4L8.9 5.3" stroke="#5f7282" stroke-width="1.3" fill="none"/></svg>
<div class="a" style="left:604.30px;top:833.65px;font-size:13px;line-height:18px;font-weight:400;color:#2a4231;letter-spacing:0.05px;">Pass</div>
<svg class="a" style="left:646.1px;top:799.7500000000001px;" width="10" height="10" viewBox="0 0 10 10"><g transform="translate(0.3 0.3)"><path d="M0.9 8.1L7.5 1.5" stroke="#2b7d45" stroke-width="1.4" fill="none"/><path d="M1.2 0.7H8.2M7.5 0V7.9" stroke="#2b7d45" stroke-width="1.4" fill="none"/></g></svg>
<div class="a" style="left:760.50px;top:795.35px;font-size:14px;line-height:20px;font-weight:400;color:#2b3138;letter-spacing:0px;">0.84</div>
<div class="a" style="left:760.50px;top:831.95px;font-size:14px;line-height:20px;font-weight:400;color:#2b3138;letter-spacing:0px;">0.84</div>
<svg class="a" style="left:803.0px;top:800.45px;" width="7" height="8" viewBox="0 0 7 8"><path d="M0.2 1.75H6.2M0.2 5.75H6.2" stroke="#63778a" stroke-width="1.45" transform="translate(0 0)"/></svg>
<div class="a" style="left:937.50px;top:794.45px;width:52.00px;height:20.40px;background:#e2f2e3;border-radius:4px"></div>
<svg class="a" style="left:941px;top:798px;" width="13" height="13" viewBox="0 0 13 13"><circle cx="6.5" cy="6.5" r="5.5" stroke="#2e7d42" stroke-width="1.3" fill="none"/><path d="M4.2 6.8L5.8 8.4L8.9 5.3" stroke="#2e7d42" stroke-width="1.3" fill="none"/></svg>
<div class="a" style="left:958.50px;top:796.05px;font-size:13px;line-height:18px;font-weight:400;color:#23402a;letter-spacing:0.05px;">Pass</div>
<div class="a" style="left:937.50px;top:831.25px;width:52.00px;height:20.80px;background:#e8e9ec;border-radius:4px"></div>
<svg class="a" style="left:941px;top:835px;" width="13" height="13" viewBox="0 0 13 13"><circle cx="6.5" cy="6.5" r="5.5" stroke="#5f7282" stroke-width="1.3" fill="none"/><path d="M4.2 6.8L5.8 8.4L8.9 5.3" stroke="#5f7282" stroke-width="1.3" fill="none"/></svg>
<div class="a" style="left:958.50px;top:833.65px;font-size:13px;line-height:18px;font-weight:400;color:#2a4231;letter-spacing:0.05px;">Pass</div>
<svg class="a" style="left:1000.3000000000001px;top:799.7500000000001px;" width="10" height="10" viewBox="0 0 10 10"><g transform="translate(0.3 0.3)"><path d="M0.9 8.1L7.5 1.5" stroke="#2b7d45" stroke-width="1.4" fill="none"/><path d="M1.2 0.7H8.2M7.5 0V7.9" stroke="#2b7d45" stroke-width="1.4" fill="none"/></g></svg>
<div class="a" style="left:1115.00px;top:794.45px;width:52.00px;height:20.40px;background:#e2f2e3;border-radius:4px"></div>
<svg class="a" style="left:1119px;top:798px;" width="13" height="13" viewBox="0 0 13 13"><circle cx="6.5" cy="6.5" r="5.5" stroke="#2e7d42" stroke-width="1.3" fill="none"/><path d="M4.2 6.8L5.8 8.4L8.9 5.3" stroke="#2e7d42" stroke-width="1.3" fill="none"/></svg>
<div class="a" style="left:1136.00px;top:796.05px;font-size:13px;line-height:18px;font-weight:400;color:#23402a;letter-spacing:0.05px;">Pass</div>
<div class="a" style="left:1115.00px;top:831.25px;width:52.00px;height:20.80px;background:#e8e9ec;border-radius:4px"></div>
<svg class="a" style="left:1119px;top:835px;" width="13" height="13" viewBox="0 0 13 13"><circle cx="6.5" cy="6.5" r="5.5" stroke="#5f7282" stroke-width="1.3" fill="none"/><path d="M4.2 6.8L5.8 8.4L8.9 5.3" stroke="#5f7282" stroke-width="1.3" fill="none"/></svg>
<div class="a" style="left:1136.00px;top:833.65px;font-size:13px;line-height:18px;font-weight:400;color:#2a4231;letter-spacing:0.05px;">Pass</div>
<svg class="a" style="left:1177.8px;top:799.7500000000001px;" width="10" height="10" viewBox="0 0 10 10"><g transform="translate(0.3 0.3)"><path d="M0.9 8.1L7.5 1.5" stroke="#2b7d45" stroke-width="1.4" fill="none"/><path d="M1.2 0.7H8.2M7.5 0V7.9" stroke="#2b7d45" stroke-width="1.4" fill="none"/></g></svg>
</div></div>
</body></html>
